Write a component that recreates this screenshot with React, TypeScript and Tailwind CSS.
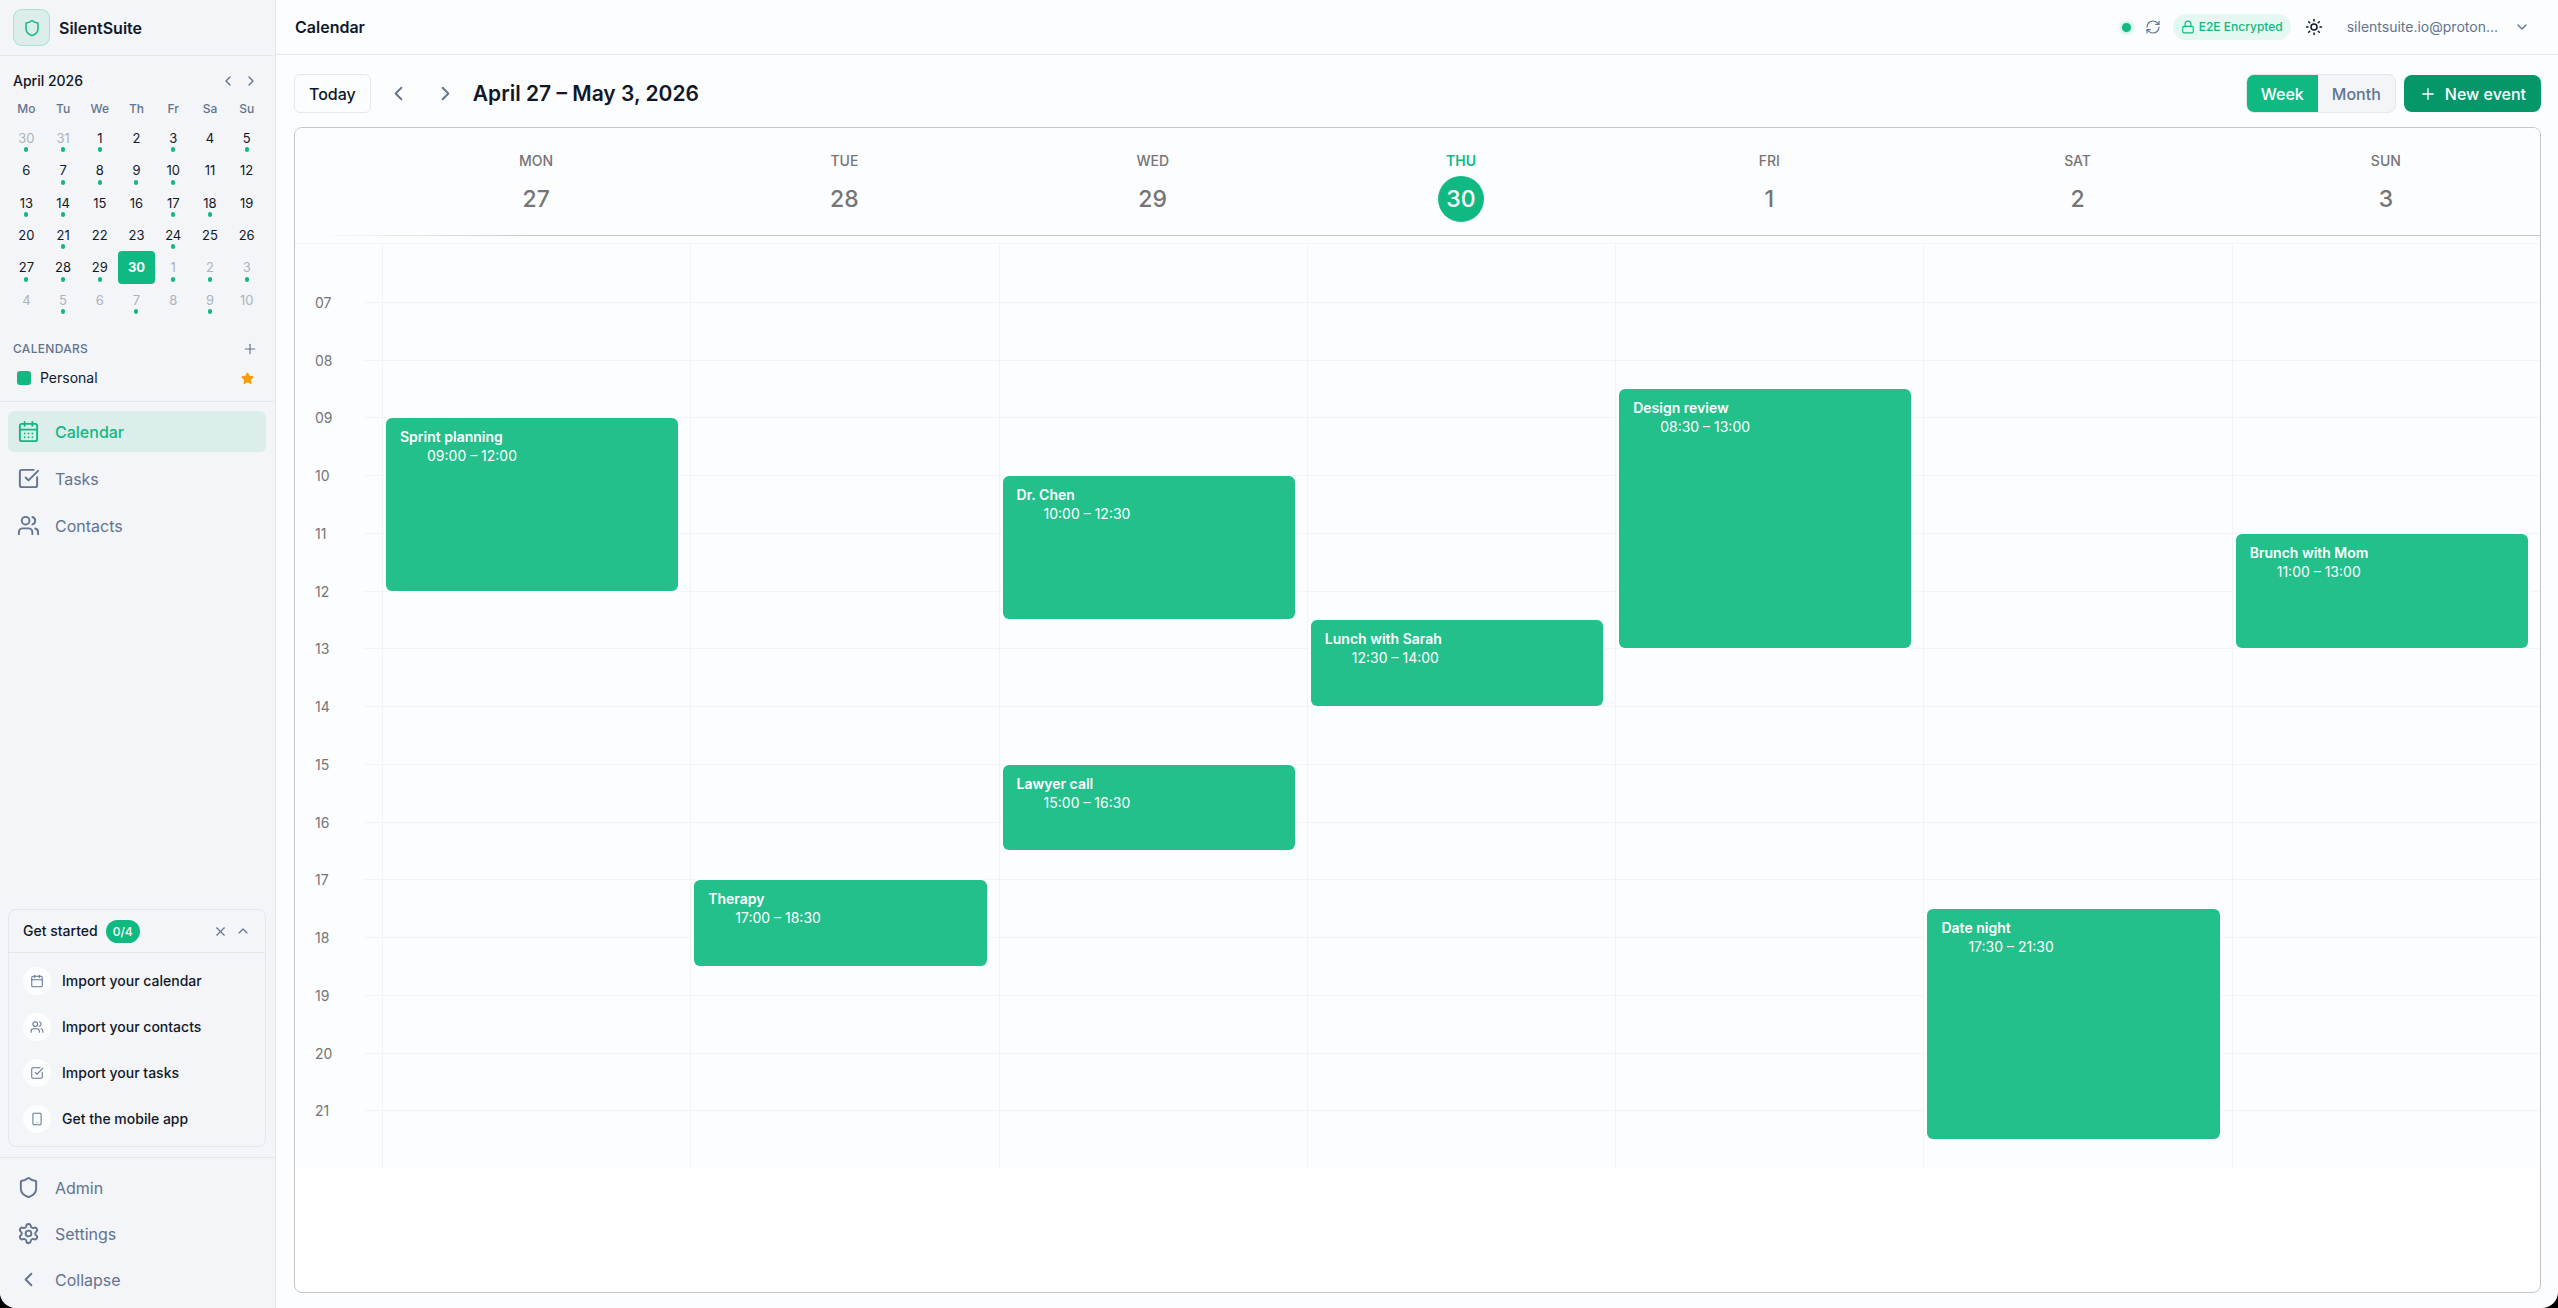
import React, { useState } from 'react';
import {
    Calendar,
    CalendarDays,
    ChevronDown,
    ChevronLeft,
    ChevronRight,
    ChevronUp,
    Lock,
    Plus,
    RefreshCw,
    Settings,
    Shield,
    Smartphone,
    SquareCheckBig,
    Star,
    Sun,
    Users,
    X,
} from 'lucide-react';

const WEEKDAYS = ['Mo', 'Tu', 'We', 'Th', 'Fr', 'Sa', 'Su'];

// Day number, whether it has events, whether it falls outside of the month
const MONTH: { day: number; dot?: boolean; out?: boolean }[] = [
    { day: 30, dot: true, out: true }, { day: 31, dot: true, out: true }, { day: 1, dot: true }, { day: 2 }, { day: 3, dot: true }, { day: 4 }, { day: 5, dot: true },
    { day: 6 }, { day: 7, dot: true }, { day: 8, dot: true }, { day: 9, dot: true }, { day: 10, dot: true }, { day: 11 }, { day: 12 },
    { day: 13, dot: true }, { day: 14, dot: true }, { day: 15 }, { day: 16 }, { day: 17, dot: true }, { day: 18, dot: true }, { day: 19 },
    { day: 20 }, { day: 21, dot: true }, { day: 22 }, { day: 23 }, { day: 24, dot: true }, { day: 25 }, { day: 26 },
    { day: 27, dot: true }, { day: 28, dot: true }, { day: 29, dot: true }, { day: 30 }, { day: 1, dot: true, out: true }, { day: 2, dot: true, out: true }, { day: 3, dot: true, out: true },
    { day: 4, out: true }, { day: 5, dot: true, out: true }, { day: 6, out: true }, { day: 7, dot: true, out: true }, { day: 8, out: true }, { day: 9, dot: true, out: true }, { day: 10, out: true },
];

const DAYS = [
    { name: 'MON', date: 27 },
    { name: 'TUE', date: 28 },
    { name: 'WED', date: 29 },
    { name: 'THU', date: 30, today: true },
    { name: 'FRI', date: 1 },
    { name: 'SAT', date: 2 },
    { name: 'SUN', date: 3 },
];

const FIRST_HOUR = 6;
const HOURS = Array.from({ length: 15 }, (_, i) => i + 7);

// start and end are decimal hours
const EVENTS = [
    { day: 0, title: 'Sprint planning', start: 9, end: 12 },
    { day: 1, title: 'Therapy', start: 17, end: 18.5 },
    { day: 2, title: 'Dr. Chen', start: 10, end: 12.5 },
    { day: 2, title: 'Lawyer call', start: 15, end: 16.5 },
    { day: 3, title: 'Lunch with Sarah', start: 12.5, end: 14 },
    { day: 4, title: 'Design review', start: 8.5, end: 13 },
    { day: 5, title: 'Date night', start: 17.5, end: 21.5 },
    { day: 6, title: 'Brunch with Mom', start: 11, end: 13 },
];

const STEPS = [
    { label: 'Import your calendar', icon: Calendar },
    { label: 'Import your contacts', icon: Users },
    { label: 'Import your tasks', icon: SquareCheckBig },
    { label: 'Get the mobile app', icon: Smartphone },
];

const formatHour = (h: number) =>
    `${String(Math.floor(h)).padStart(2, '0')}:${h % 1 ? '30' : '00'}`;

const gridRow = (h: number) => (h - FIRST_HOUR) * 2 + 1;

const MiniCalendar: React.FC = () => (
    <div className="pt-[15px] pl-2 pr-2.5">
        <div className="flex items-center justify-between h-5 pl-[5px] pr-1">
            <h2 className="text-sm font-medium">April 2026</h2>
            <div className="flex gap-[3px] text-slate-500">
                <button aria-label="Previous month" className="w-5 h-5 flex items-center justify-center"><ChevronLeft size={16} /></button>
                <button aria-label="Next month" className="w-5 h-5 flex items-center justify-center"><ChevronRight size={16} /></button>
            </div>
        </div>
        <div className="grid grid-cols-7 mt-2 text-center">
            {WEEKDAYS.map(d => (
                <div key={d} className="text-xs leading-5 font-medium text-slate-500">{d}</div>
            ))}
        </div>
        <div className="grid grid-cols-7 grid-rows-6 h-[194px] mt-[3px]">
            {MONTH.map(({ day, dot, out }, i) => {
                const today = i === 31;
                return (
                    <button
                        key={i}
                        className={`relative rounded text-[13px] leading-5 ${today ? 'bg-[#10b981] text-white font-bold' : out ? 'text-[#adb3bd]' : 'text-gray-900'}`}
                    >
                        {day}
                        {dot && <span className="absolute bottom-0.5 left-1/2 -translate-x-1/2 w-1 h-[5px] rounded-full bg-[#10b981]" />}
                    </button>
                );
            })}
        </div>
    </div>
);

interface NavItemProps {
    label: string;
    icon: React.ElementType;
    active?: boolean;
}

const NavItem: React.FC<NavItemProps> = ({ label, icon: Icon, active }) => (
    <a
        href="#"
        className={`flex items-center gap-[15px] h-[41px] px-[9px] rounded-md text-base ${active ? 'bg-[#dceeeb] text-[#10b981] font-medium' : 'text-slate-500'}`}
    >
        <Icon size={23} strokeWidth={2} />
        {label}
    </a>
);

const GetStarted: React.FC = () => (
    <section className="ml-2 mr-[9px] mb-2.5 rounded-lg border border-slate-200">
        <div className="flex items-center h-[43px] px-3.5 border-b border-slate-200">
            <h2 className="text-sm font-medium">Get started</h2>
            <span className="ml-2 px-[7px] h-[23px] leading-[23px] rounded-full bg-[#10b981] text-white text-xs font-medium">0/4</span>
            <div className="ml-auto flex gap-1.5 text-slate-500">
                <button aria-label="Dismiss" className="w-4 h-4"><X size={15} strokeWidth={1.75} /></button>
                <button aria-label="Fold" className="w-4 h-4"><ChevronUp size={16} strokeWidth={1.75} /></button>
            </div>
        </div>
        <div className="flex flex-col gap-[18px] px-3.5 pt-3.5 pb-[13px]">
            {STEPS.map(({ label, icon: Icon }) => (
                <button key={label} className="flex items-center gap-[11px] text-left text-sm font-medium">
                    <span className="w-7 h-7 rounded-full bg-[#fcfdff] text-slate-500 flex items-center justify-center">
                        <Icon size={14} strokeWidth={1.75} />
                    </span>
                    {label}
                </button>
            ))}
        </div>
    </section>
);

const Sidebar: React.FC = () => (
    <aside className="w-[276px] shrink-0 flex flex-col bg-[#f3f5f9] border-r border-slate-200">
        <div className="flex items-center gap-[9px] h-14 px-[13px] border-b border-slate-200">
            <div className="w-[37px] h-[37px] rounded-[9px] border border-[#10b981]/25 bg-[#dceeeb] text-[#10b981] flex items-center justify-center">
                <Shield size={18} />
            </div>
            <span className="text-base font-semibold">SilentSuite</span>
        </div>

        <MiniCalendar />

        <div className="mt-[21px] pl-[13px] pr-[17px] pb-[11px] border-b border-slate-200">
            <div className="flex items-center justify-between h-6 text-slate-500">
                <h2 className="text-xs font-medium tracking-wide">CALENDARS</h2>
                <button aria-label="Add calendar" className="w-4 h-4"><Plus size={16} strokeWidth={1.75} /></button>
            </div>
            <div className="flex items-center h-6 mt-[5px] pl-1 pr-1">
                <span className="w-3.5 h-3.5 rounded-[3px] bg-[#10b981]" />
                <span className="ml-[9px] text-sm">Personal</span>
                <Star size={13} className="ml-auto fill-[#f59e0b] text-[#f59e0b]" />
            </div>
        </div>

        <nav className="flex flex-col gap-1.5 pl-2 pr-[9px] pt-[9px]">
            <NavItem label="Calendar" icon={CalendarDays} active />
            <NavItem label="Tasks" icon={SquareCheckBig} />
            <NavItem label="Contacts" icon={Users} />
        </nav>

        <div className="flex-1" />
        <GetStarted />
        <nav className="flex flex-col gap-[5px] pl-2 pr-[9px] pt-[9px] pb-2 border-t border-slate-200">
            <NavItem label="Admin" icon={Shield} />
            <NavItem label="Settings" icon={Settings} />
            <NavItem label="Collapse" icon={ChevronLeft} />
        </nav>
    </aside>
);

const TopBar: React.FC = () => (
    <header className="flex items-center h-[55px] pl-[19px] pr-7 border-b border-slate-200">
        <h1 className="text-base font-semibold">Calendar</h1>
        <div className="ml-auto flex items-center text-slate-500">
            <span className="w-[9px] h-[9px] rounded-full bg-[#10b981] shadow-[0_0_5px_1px_rgba(16,185,129,0.35)]" />
            <button aria-label="Sync" className="ml-3.5"><RefreshCw size={16} strokeWidth={1.75} /></button>
            <span className="ml-3 flex items-center gap-1 h-[26px] px-2 rounded-full bg-[#e5f7f1] text-[#10b981] text-xs font-medium">
                <Lock size={14} />
                E2E Encrypted
            </span>
            <button aria-label="Theme" className="ml-3.5 text-gray-900"><Sun size={18} /></button>
            <button className="ml-6 flex items-center gap-4 text-sm">
                silentsuite.io@proton...
                <ChevronDown size={16} />
            </button>
        </div>
    </header>
);

const WeekGrid: React.FC = () => (
    <section className="flex-1 min-h-0 mt-3.5 rounded-lg border border-[#c4c7c9] bg-white overflow-hidden">
        <div className="bg-[#fcfdff]">
            <div className="grid grid-cols-[87px_repeat(7,minmax(0,1fr))] h-[107px] pt-[23px]">
                {DAYS.map(({ name, date, today }, i) => (
                    <div key={name} className={`flex flex-col items-center ${i === 0 ? 'col-start-2' : ''} ${today ? 'text-[#10b981]' : 'text-[#757575]'}`}>
                        <div className={`text-sm ${today ? 'font-semibold' : 'font-medium'}`}>{name}</div>
                        <div className={`mt-[5px] w-[46px] h-[46px] rounded-full flex items-center justify-center text-[23px] font-medium ${today ? 'bg-[#10b981] text-white' : ''}`}>{date}</div>
                    </div>
                ))}
            </div>
            <div className="h-px ml-4 bg-[linear-gradient(to_right,transparent,#c4c7c9_230px)]" />
            <div className="h-2 border-b border-[#f1f3f6]" />
            <div className="grid grid-cols-[69px_18px_repeat(7,minmax(0,1fr))] grid-rows-[repeat(32,minmax(0,1fr))] h-[924px]">
                {HOURS.map(h => (
                    <React.Fragment key={h}>
                        <div className="col-start-1 h-5 -mt-[9px] pl-5 text-sm text-[#757575]" style={{ gridRowStart: gridRow(h) }}>
                            {String(h).padStart(2, '0')}
                        </div>
                        <div className="col-start-2 -col-end-1 border-t border-[#f1f3f6]" style={{ gridRowStart: gridRow(h) }} />
                    </React.Fragment>
                ))}
                {DAYS.map(({ name }, i) => (
                    <div key={name} className="row-start-1 -row-end-1 border-l border-[#f1f3f6]" style={{ gridColumnStart: i + 3 }} />
                ))}
                {EVENTS.map(({ day, title, start, end }) => (
                    <button
                        key={title}
                        className="mt-px ml-1 mr-3 px-3.5 py-[9px] rounded-md ring-2 ring-[#fcfdff] bg-[#24c08c] text-white text-sm leading-[19px] text-left flex flex-col items-start overflow-hidden"
                        style={{ gridColumnStart: day + 3, gridRow: `${gridRow(start)} / ${gridRow(end)}` }}
                    >
                        <span className="font-semibold">{title}</span>
                        <span className="pl-[27px]">{formatHour(start)} – {formatHour(end)}</span>
                    </button>
                ))}
            </div>
        </div>
    </section>
);

const App: React.FC = () => {
    const [view, setView] = useState<'week' | 'month'>('week');

    return (
        <div className="bg-black">
            <div className="flex h-screen rounded-b-2xl overflow-hidden bg-[#fcfdff] text-gray-900 font-['Inter',sans-serif]">
                <Sidebar />
                <main className="flex-1 min-w-0 flex flex-col">
                    <TopBar />
                    <div className="flex-1 min-h-0 flex flex-col pl-[18px] pr-[17px] pt-[19px] pb-[15px]">
                        {/* Toolbar */}
                        <div className="flex items-center h-[39px]">
                            <button className="h-[39px] px-3.5 rounded-md border border-slate-200 font-medium">Today</button>
                            <button aria-label="Previous week" className="ml-4 w-6 flex justify-center text-slate-500"><ChevronLeft size={23} /></button>
                            <button aria-label="Next week" className="ml-[23px] w-6 flex justify-center text-slate-500"><ChevronRight size={23} /></button>
                            <h2 className="ml-[15px] text-[21px] font-semibold">April 27 – May 3, 2026</h2>
                            <div className="ml-auto flex h-[39px] rounded-lg border border-slate-200 bg-[#f3f5f9] overflow-hidden font-medium">
                                <button onClick={() => setView('week')} className={`px-3.5 ${view === 'week' ? 'bg-[#10b981] text-white' : 'text-slate-500'}`}>Week</button>
                                <button onClick={() => setView('month')} className={`px-3.5 ${view === 'month' ? 'bg-[#10b981] text-white' : 'text-slate-500'}`}>Month</button>
                            </div>
                            <button className="ml-2 h-[37px] px-[15px] rounded-lg bg-[#059669] text-white font-medium flex items-center gap-2">
                                <Plus size={18} strokeWidth={1.75} />
                                New event
                            </button>
                        </div>
                        <WeekGrid />
                    </div>
                </main>
            </div>
        </div>
    );
};

export default App;
